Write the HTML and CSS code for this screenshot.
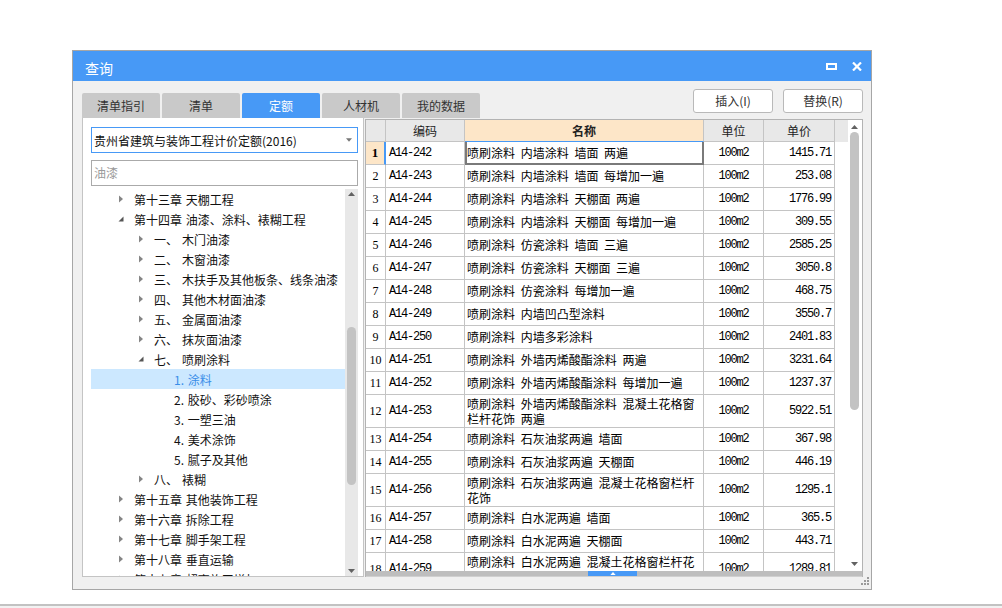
FILE: index.html
```html
<!DOCTYPE html>
<html lang="zh-CN">
<head>
<meta charset="utf-8">
<title>查询</title>
<link rel="stylesheet" href="styles.css">
</head>
<body>
<div class="desk">
  <div class="dialog">
    <div class="titlebar">
      <span class="title">查询</span>
      <div class="winbtns">
        <span class="maxbtn"></span>
        <svg class="closebtn" viewBox="0 0 10 9"><path d="M1 0.5 L9 8.5 M9 0.5 L1 8.5"/></svg>
      </div>
    </div>
    <div class="dbody">
      <div class="toprow">
        <div class="tabs">
          <div class="tab">清单指引</div>
          <div class="tab">清单</div>
          <div class="tab active">定额</div>
          <div class="tab">人材机</div>
          <div class="tab">我的数据</div>
        </div>
        <div class="actions">
          <button class="btn">插入(I)</button>
          <button class="btn">替换(R)</button>
        </div>
      </div>
      <div class="main">
        <div class="left">
          <div class="combo"><span>贵州省建筑与装饰工程计价定额(2016)</span><svg class="caret" viewBox="0 0 7 4"><path d="M0 0 H7 L3.5 4Z"/></svg></div>
          <div class="search">油漆</div>
          <div class="treewrap">
            <div class="tree">
              <div class="tr l1"><svg class="ar" viewBox="0 0 8 8"><path d="M2 0.5 L6 4 L2 7.5Z"/></svg><span>第十三章 天棚工程</span></div>
              <div class="tr l1"><svg class="ar open" viewBox="0 0 8 8"><path d="M6.5 1.5 L6.5 6.5 L1.5 6.5Z"/></svg><span>第十四章 油漆、涂料、裱糊工程</span></div>
              <div class="tr l2"><svg class="ar" viewBox="0 0 8 8"><path d="M2 0.5 L6 4 L2 7.5Z"/></svg><span class="num">一、</span><span>木门油漆</span></div>
              <div class="tr l2"><svg class="ar" viewBox="0 0 8 8"><path d="M2 0.5 L6 4 L2 7.5Z"/></svg><span class="num">二、</span><span>木窗油漆</span></div>
              <div class="tr l2"><svg class="ar" viewBox="0 0 8 8"><path d="M2 0.5 L6 4 L2 7.5Z"/></svg><span class="num">三、</span><span>木扶手及其他板条、线条油漆</span></div>
              <div class="tr l2"><svg class="ar" viewBox="0 0 8 8"><path d="M2 0.5 L6 4 L2 7.5Z"/></svg><span class="num">四、</span><span>其他木材面油漆</span></div>
              <div class="tr l2"><svg class="ar" viewBox="0 0 8 8"><path d="M2 0.5 L6 4 L2 7.5Z"/></svg><span class="num">五、</span><span>金属面油漆</span></div>
              <div class="tr l2"><svg class="ar" viewBox="0 0 8 8"><path d="M2 0.5 L6 4 L2 7.5Z"/></svg><span class="num">六、</span><span>抹灰面油漆</span></div>
              <div class="tr l2"><svg class="ar open" viewBox="0 0 8 8"><path d="M6.5 1.5 L6.5 6.5 L1.5 6.5Z"/></svg><span class="num">七、</span><span>喷刷涂料</span></div>
              <div class="tr l3 selected"><span>1. 涂料</span></div>
              <div class="tr l3"><span>2. 胶砂、彩砂喷涂</span></div>
              <div class="tr l3"><span>3. 一塑三油</span></div>
              <div class="tr l3"><span>4. 美术涂饰</span></div>
              <div class="tr l3"><span>5. 腻子及其他</span></div>
              <div class="tr l2"><svg class="ar" viewBox="0 0 8 8"><path d="M2 0.5 L6 4 L2 7.5Z"/></svg><span class="num">八、</span><span>裱糊</span></div>
              <div class="tr l1"><svg class="ar" viewBox="0 0 8 8"><path d="M2 0.5 L6 4 L2 7.5Z"/></svg><span>第十五章 其他装饰工程</span></div>
              <div class="tr l1"><svg class="ar" viewBox="0 0 8 8"><path d="M2 0.5 L6 4 L2 7.5Z"/></svg><span>第十六章 拆除工程</span></div>
              <div class="tr l1"><svg class="ar" viewBox="0 0 8 8"><path d="M2 0.5 L6 4 L2 7.5Z"/></svg><span>第十七章 脚手架工程</span></div>
              <div class="tr l1"><svg class="ar" viewBox="0 0 8 8"><path d="M2 0.5 L6 4 L2 7.5Z"/></svg><span>第十八章 垂直运输</span></div>
              <div class="tr l1"><svg class="ar" viewBox="0 0 8 8"><path d="M2 0.5 L6 4 L2 7.5Z"/></svg><span>第十九章 超高施工增加</span></div>
            </div>
            <div class="vs vs-tree">
              <svg class="sa" viewBox="0 0 7 4"><path d="M3.5 0 L7 4 H0Z"/></svg>
              <div class="thumb"></div>
              <svg class="sa down" viewBox="0 0 7 4"><path d="M0 0 H7 L3.5 4Z"/></svg>
            </div>
          </div>
        </div>
        <div class="tpanel">
          <div class="gridwrap">
            <div class="gridview">
              <div class="row head"><div class="c rn"></div><div class="c">编码</div><div class="c hl">名称</div><div class="c">单位</div><div class="c">单价</div></div>
              <div class="row"><div class="c rn cur">1</div><div class="c code">A14-242</div><div class="c nm sel">喷刷涂料 内墙涂料 墙面 两遍</div><div class="c unit">100m2</div><div class="c price">1415.71</div></div>
              <div class="row"><div class="c rn">2</div><div class="c code">A14-243</div><div class="c nm">喷刷涂料 内墙涂料 墙面 每增加一遍</div><div class="c unit">100m2</div><div class="c price">253.08</div></div>
              <div class="row"><div class="c rn">3</div><div class="c code">A14-244</div><div class="c nm">喷刷涂料 内墙涂料 天棚面 两遍</div><div class="c unit">100m2</div><div class="c price">1776.99</div></div>
              <div class="row"><div class="c rn">4</div><div class="c code">A14-245</div><div class="c nm">喷刷涂料 内墙涂料 天棚面 每增加一遍</div><div class="c unit">100m2</div><div class="c price">309.55</div></div>
              <div class="row"><div class="c rn">5</div><div class="c code">A14-246</div><div class="c nm">喷刷涂料 仿瓷涂料 墙面 三遍</div><div class="c unit">100m2</div><div class="c price">2585.25</div></div>
              <div class="row"><div class="c rn">6</div><div class="c code">A14-247</div><div class="c nm">喷刷涂料 仿瓷涂料 天棚面 三遍</div><div class="c unit">100m2</div><div class="c price">3050.8</div></div>
              <div class="row"><div class="c rn">7</div><div class="c code">A14-248</div><div class="c nm">喷刷涂料 仿瓷涂料 每增加一遍</div><div class="c unit">100m2</div><div class="c price">468.75</div></div>
              <div class="row"><div class="c rn">8</div><div class="c code">A14-249</div><div class="c nm">喷刷涂料 内墙凹凸型涂料</div><div class="c unit">100m2</div><div class="c price">3550.7</div></div>
              <div class="row"><div class="c rn">9</div><div class="c code">A14-250</div><div class="c nm">喷刷涂料 内墙多彩涂料</div><div class="c unit">100m2</div><div class="c price">2401.83</div></div>
              <div class="row"><div class="c rn">10</div><div class="c code">A14-251</div><div class="c nm">喷刷涂料 外墙丙烯酸酯涂料 两遍</div><div class="c unit">100m2</div><div class="c price">3231.64</div></div>
              <div class="row"><div class="c rn">11</div><div class="c code">A14-252</div><div class="c nm">喷刷涂料 外墙丙烯酸酯涂料 每增加一遍</div><div class="c unit">100m2</div><div class="c price">1237.37</div></div>
              <div class="row tall"><div class="c rn">12</div><div class="c code">A14-253</div><div class="c nm">喷刷涂料 外墙丙烯酸酯涂料 混凝土花格窗<br>栏杆花饰 两遍</div><div class="c unit">100m2</div><div class="c price">5922.51</div></div>
              <div class="row"><div class="c rn">13</div><div class="c code">A14-254</div><div class="c nm">喷刷涂料 石灰油浆两遍 墙面</div><div class="c unit">100m2</div><div class="c price">367.98</div></div>
              <div class="row"><div class="c rn">14</div><div class="c code">A14-255</div><div class="c nm">喷刷涂料 石灰油浆两遍 天棚面</div><div class="c unit">100m2</div><div class="c price">446.19</div></div>
              <div class="row tall"><div class="c rn">15</div><div class="c code">A14-256</div><div class="c nm">喷刷涂料 石灰油浆两遍 混凝土花格窗栏杆<br>花饰</div><div class="c unit">100m2</div><div class="c price">1295.1</div></div>
              <div class="row"><div class="c rn">16</div><div class="c code">A14-257</div><div class="c nm">喷刷涂料 白水泥两遍 墙面</div><div class="c unit">100m2</div><div class="c price">365.5</div></div>
              <div class="row"><div class="c rn">17</div><div class="c code">A14-258</div><div class="c nm">喷刷涂料 白水泥两遍 天棚面</div><div class="c unit">100m2</div><div class="c price">443.71</div></div>
              <div class="row tall"><div class="c rn">18</div><div class="c code">A14-259</div><div class="c nm">喷刷涂料 白水泥两遍 混凝土花格窗栏杆花<br>饰</div><div class="c unit">100m2</div><div class="c price">1289.81</div></div>
            </div>
            <div class="vs vs-table">
              <svg class="sa" viewBox="0 0 7 4"><path d="M3.5 0 L7 4 H0Z"/></svg>
              <div class="thumb"></div>
              <svg class="sa down" viewBox="0 0 7 4"><path d="M0 0 H7 L3.5 4Z"/></svg>
            </div>
          </div>
          <div class="hs"><div class="hthumb"><svg viewBox="0 0 7 4"><path d="M3.5 0 L7 4 H0Z"/></svg></div></div>
        </div>
      </div>
      <div class="bottomstrip">
        <svg class="grip" viewBox="0 0 8 8"><path d="M6 0h2v2h-2z M3 3h2v2h-2z M6 3h2v2h-2z M0 6h2v2h-2z M3 6h2v2h-2z M6 6h2v2h-2z"/></svg>
      </div>
    </div>
  </div>
</div>
<div class="statusline"></div>
</body>
</html>
```

FILE: styles.css
```css
* { box-sizing: border-box; }
html, body { margin: 0; }
body {
  width: 1002px;
  height: 608px;
  overflow: hidden;
  background: #fff;
  font-family: "Noto Sans CJK SC", "Noto Sans", sans-serif;
  font-size: 12px;
  color: #222;
  display: flex;
  flex-direction: column;
}
.desk { flex: 1; padding: 50px 0 0 72px; }
.statusline { height: 4px; border-top: 2px solid #c2c2c2; background: #f2f2f2; }

.dialog {
  width: 800px;
  height: 540px;
  border: 1px solid #a6a6a6;
  background: #f0f0f0;
  display: flex;
  flex-direction: column;
}
.titlebar {
  height: 30px;
  background: #4799f6;
  color: #fff;
  display: flex;
  align-items: center;
  justify-content: space-between;
  padding: 0 9px 0 12px;
}
.title { font-size: 14px; padding-top: 4px; }
.winbtns { display: flex; align-items: center; gap: 15px; }
.maxbtn { width: 11px; height: 7px; border: 2px solid #fff; }
.closebtn { width: 10px; height: 9px; display: block; }
.closebtn path { stroke: #fff; stroke-width: 2.2; fill: none; }

.dbody { flex: 1; display: flex; flex-direction: column; padding: 0 8px 0 9px; }
.toprow { height: 37px; display: flex; justify-content: space-between; }
.tabs { display: flex; align-items: flex-end; gap: 2px; }
.tab {
  width: 78px;
  height: 25px;
  line-height: 25px;
  text-align: center;
  background: #c9c9c9;
  border-radius: 2px 2px 0 0;
  color: #333;
}
.tab.active { background: #4799f6; color: #fff; }
.actions { display: flex; gap: 10px; padding-top: 8px; }
.btn {
  width: 80px;
  height: 24px;
  padding: 0;
  border: 1px solid #b9b9b9;
  border-radius: 3px;
  background: #fff;
  font: inherit;
  color: #333;
  line-height: 22px;
}

.main { height: 459px; display: flex; }
.left {
  width: 282px;
  height: 459px;
  background: #fff;
  border: 1px solid #c4c4c4;
  border-top: 0;
  padding: 9px 5px 0 8px;
  display: flex;
  flex-direction: column;
}
.combo {
  height: 26px;
  border: 1px solid #4799f6;
  display: flex;
  align-items: center;
  justify-content: space-between;
  padding: 0 5px 0 2px;
  color: #111;
  font-size: 12px;
}
.caret { width: 6px; height: 4px; display: block; }
.caret path { fill: #777; }
.search {
  height: 26px;
  margin-top: 7px;
  border: 1px solid #aaa;
  padding-left: 2px;
  line-height: 24px;
  color: #9a9a9a;
}
.treewrap { flex: 1; margin-top: 3px; display: flex; min-height: 0; }
.tree { flex: 1; overflow: hidden; }
.tr {
  height: 20px;
  display: flex;
  align-items: center;
  white-space: nowrap;
  color: #111;
  word-spacing: 1px;
}
.tr.l1 { padding-left: 26px; }
.tr.l2 { padding-left: 46px; }
.tr.l3 { padding-left: 83px; }
.ar { width: 8px; height: 8px; margin-right: 9px; flex: none; display: block; }
.ar path { fill: #858585; }
.ar.open path { fill: #555; }
.num { display: inline-block; width: 28px; }
.tr.selected { background: #cce8ff; color: #3a8ee8; }

.vs {
  width: 13px;
  display: flex;
  flex-direction: column;
  align-items: center;
  flex: none;
}
.vs-tree { background: #e8e8e8; padding: 3px 0 3px; }
.vs .sa { width: 7px; height: 4px; display: block; flex: none; }
.vs .sa path { fill: #626262; }
.vs .thumb { width: 9px; background: #c3c3c3; border-radius: 5px; flex: none; }
.vs-tree .thumb { margin-top: 131px; height: 158px; }
.vs .sa.down { margin-top: auto; }

.tpanel {
  width: 498px;
  margin: 1px 0 0 1px;
  background: #fff;
  border: 1px solid #b3b3b3;
  border-bottom: 0;
  display: flex;
  flex-direction: column;
}
.gridwrap { height: 451px; display: flex; }
.gridview { flex: 1; overflow: hidden; }
.vs-table { background: #fff; margin-right: 1px; padding: 5px 0 5px; }
.vs-table .thumb { margin-top: 3px; height: 278px; }

.row {
  display: grid;
  grid-template-columns: 20px 79px 239px 60px 71px;
  height: 23px;
  color: #000;
}
.row.tall { height: 33px; }
.c {
  border-right: 1px solid #c4c4c4;
  border-bottom: 1px solid #c4c4c4;
  overflow: hidden;
  white-space: nowrap;
  line-height: 22px;
}
.tall .c { line-height: 32px; }
.head { height: 22px; background: #e8e8e8; }
.head .c { text-align: center; line-height: 21px; color: #222; }
.head .hl { background: #fde6c8; font-weight: bold; border-bottom-color: #4799f6; }
.rn { text-align: center; font-family: "Liberation Serif", serif; font-size: 12px; }
.rn.cur { background: #fde6c8; border-right: 2px solid #4799f6; font-weight: bold; font-size: 13px; }
.code, .unit, .price {
  font-family: "Liberation Mono", monospace;
  font-size: 12px;
  letter-spacing: -1.2px;
}
.code { padding-left: 3px; }
.unit { text-align: center; }
.price { text-align: right; padding-right: 3px; }
.nm { padding-left: 2px; word-spacing: 3px; }
.tall .nm { line-height: 15px; padding-top: 1px; }
.nm.sel { border: 2px solid #7a7a7a; border-top: 0; padding-left: 0; }

.hs { height: 6px; background: #bebebe; border-bottom: 1px solid #d0d0d0; display: flex; }
.hthumb {
  margin-left: 222px;
  width: 49px;
  background: #4799f6;
  display: flex;
  align-items: center;
  justify-content: center;
}
.hthumb svg { width: 6px; height: 3px; display: block; }
.hthumb path { fill: #fff; }

.bottomstrip { height: 12px; display: flex; justify-content: flex-end; }
.grip { width: 8px; height: 8px; display: block; margin-right: -6px; }
.grip path { fill: #9a9a9a; }
```
